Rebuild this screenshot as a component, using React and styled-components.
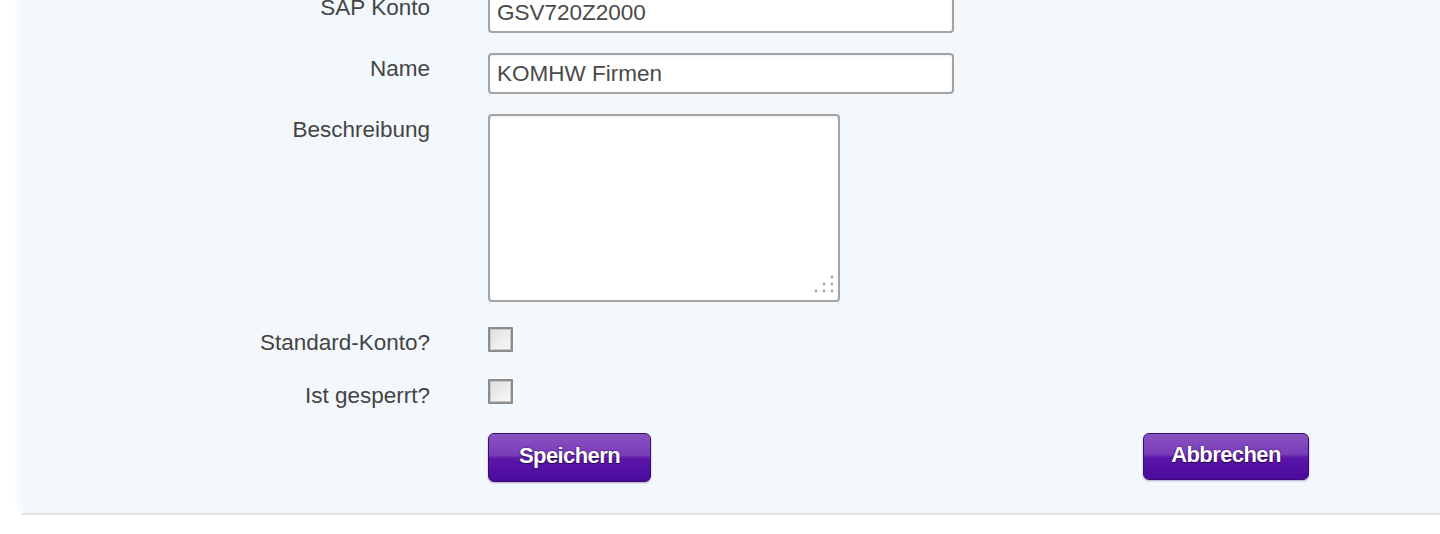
import React from "react";
import styled, { createGlobalStyle } from "styled-components";

const Global = createGlobalStyle`
  html, body {
    margin: 0;
    padding: 0;
    background: #fff;
    overflow: hidden;
  }
  body {
    font-family: "Liberation Sans", Arial, sans-serif;
  }
`;

const Panel = styled.div`
  margin-left: 22px;
  margin-top: -8px;
  background: #f3f8fc;
  border-bottom: 2px solid #dfe2e4;
  box-shadow: -6px 0 8px -4px rgba(0, 0, 0, 0.05);
  padding-bottom: 31px;
`;

const Form = styled.form`
  display: flex;
  flex-direction: column;
  gap: 20px;
`;

const Row = styled.div`
  display: grid;
  grid-template-columns: 408px 1fr;
  column-gap: 58px;
  align-items: start;
  height: ${(p) => (p.$height ? `${p.$height}px` : "auto")};
`;

const Label = styled.label`
  text-align: right;
  font-size: 22.5px;
  line-height: 26px;
  color: #444;
  padding-top: ${(p) => p.$offset ?? 3}px;
`;

const TextInput = styled.input`
  box-sizing: border-box;
  width: 466px;
  height: 41px;
  padding: 0 8px 0 7px;
  border: 2px solid #a3a3a3;
  border-radius: 4px;
  background: #fff;
  box-shadow: inset 0 1px 2px rgba(0, 0, 0, 0.08);
  font-family: "Liberation Sans", Arial, sans-serif;
  font-size: 22.5px;
  color: #4a4a4a;
  outline: none;
`;

const AreaWrap = styled.div`
  position: relative;
  width: 352px;
  height: 188px;
`;

const TextArea = styled.textarea`
  box-sizing: border-box;
  width: 100%;
  height: 100%;
  border: 2px solid #a3a3a3;
  border-radius: 4px;
  background: #fff;
  box-shadow: inset 0 1px 2px rgba(0, 0, 0, 0.08);
  resize: none;
  font-family: "Liberation Sans", Arial, sans-serif;
  font-size: 22.5px;
  outline: none;
`;

const Grip = styled.span`
  position: absolute;
  right: 6px;
  bottom: 9px;
  width: 20px;
  height: 20px;
  pointer-events: none;
`;

const Check = styled.input.attrs({ type: "checkbox" })`
  appearance: none;
  box-sizing: border-box;
  margin: 5px 0 0;
  width: 25px;
  height: 25px;
  border: 2px solid #8c8c8c;
  border-radius: 1px;
  background: linear-gradient(135deg, #dcdcdc 0%, #eeeeee 55%, #f8f8f8 100%);
  box-shadow: inset 0 0 0 1px #c9c9c9;
`;

const Buttons = styled.div`
  grid-column: 2;
  width: 821px;
  display: flex;
  justify-content: space-between;
  padding-top: 7px;
`;

const Button = styled.button`
  box-sizing: border-box;
  width: ${(p) => p.$width}px;
  height: ${(p) => p.$height}px;
  padding: 0 0 3px;
  border: 1px solid #3c0b6e;
  border-radius: 6px;
  background: linear-gradient(
    to bottom,
    #8a52c2 0%,
    #7a3db8 45%,
    #5b17aa 52%,
    #4a0a9c 100%
  );
  box-shadow: 0 1px 2px rgba(60, 10, 110, 0.35);
  color: #fff;
  font-family: "Liberation Sans", Arial, sans-serif;
  font-weight: bold;
  font-size: 22px;
  letter-spacing: -0.6px;
  text-shadow: 0 1px 1px #2a0550, 0 0 2px #3a0a6a;
  cursor: pointer;
`;

const gripDots = [
  [16, 4],
  [8, 11],
  [16, 11],
  [0, 18],
  [8, 18],
  [16, 18],
];

export default function App() {
  return (
    <>
      <Global />
      <Panel>
        <Form onSubmit={(e) => e.preventDefault()}>
          <Row>
            <Label>SAP Konto</Label>
            <TextInput defaultValue="GSV720Z2000" />
          </Row>
          <Row>
            <Label>Name</Label>
            <TextInput defaultValue="KOMHW Firmen" />
          </Row>
          <Row>
            <Label>Beschreibung</Label>
            <AreaWrap>
              <TextArea />
              <Grip>
                <svg width="20" height="20" viewBox="0 0 20 20">
                  {gripDots.map(([x, y]) => (
                    <circle key={`${x}-${y}`} cx={x + 2} cy={y} r="1.4" fill="#a9a9a9" />
                  ))}
                </svg>
              </Grip>
            </AreaWrap>
          </Row>
          <Row $height={32}>
            <Label $offset={8}>Standard-Konto?</Label>
            <div>
              <Check />
            </div>
          </Row>
          <Row $height={32}>
            <Label $offset={9}>Ist gesperrt?</Label>
            <div>
              <Check />
            </div>
          </Row>
          <Row>
            <Buttons>
              <Button type="submit" $width={163} $height={49}>Speichern</Button>
              <Button type="button" $width={166} $height={47}>Abbrechen</Button>
            </Buttons>
          </Row>
        </Form>
      </Panel>
    </>
  );
}
